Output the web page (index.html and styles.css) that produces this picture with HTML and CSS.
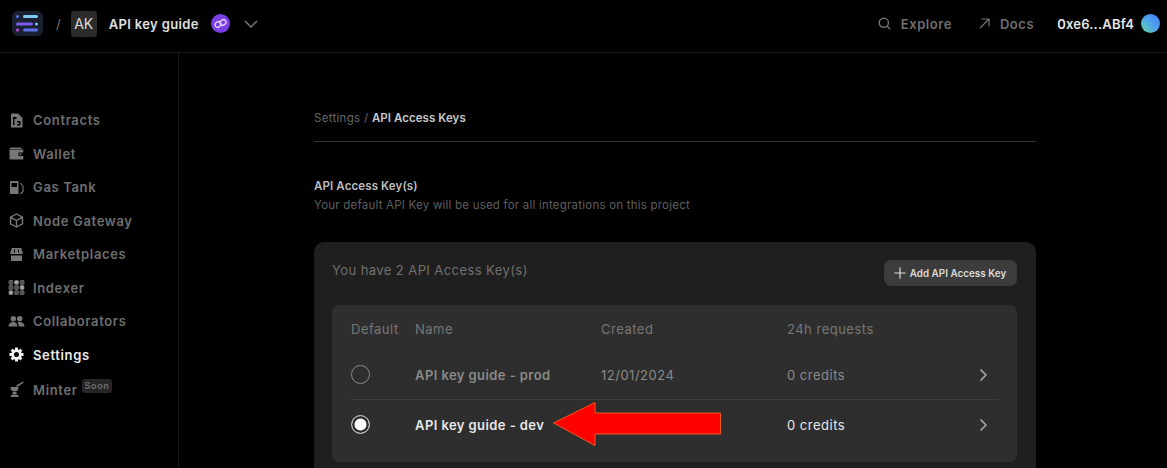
FILE: index.html
```html
<!DOCTYPE html>
<html lang="en">
<head>
<meta charset="utf-8">
<title>API Access Keys</title>
<link rel="stylesheet" href="styles.css">
</head>
<body>
<header class="topbar">
  <div class="topbar-left">
    <svg class="logo" width="32" height="26" viewBox="0 0 32 26"><rect width="31" height="25" x="0" y="0" rx="6" fill="#1b2030"/><rect x="4" y="4" width="3" height="3" rx="1.500" fill="#4f7cf0"/><rect x="11" y="4" width="15" height="3" rx="1.500" fill="#7ccbf5"/><rect x="4" y="11.500" width="17" height="3" rx="1.500" fill="#7a5cf0"/><rect x="23" y="11.500" width="3" height="3" rx="1.500" fill="#76c4f5"/><rect x="4" y="17.500" width="3" height="3" rx="1.500" fill="#c04ce0"/><rect x="11" y="17.500" width="15" height="3" rx="1.500" fill="#5a70e8"/></svg>
    <span class="slash">/</span>
    <span class="avatar">AK</span>
    <span class="project">API key guide</span>
    <svg class="chain" width="19" height="19" viewBox="0 0 19 19"><circle cx="9.500" cy="9.500" r="9.500" fill="#7b3fe4"/><rect x="4" y="8" width="6" height="5" rx="2.400" transform="rotate(-35 7 10.500)" fill="none" stroke="#e4d8f8" stroke-width="1.300"/><rect x="9" y="6" width="6" height="5" rx="2.400" transform="rotate(-35 12 8.500)" fill="none" stroke="#e4d8f8" stroke-width="1.300"/></svg>
    <svg class="caret" width="14" height="8" viewBox="0 0 14 8"><path d="M1 1l6 6 6-6" fill="none" stroke="#777" stroke-width="1.500"/></svg>
  </div>
  <nav class="topbar-right">
    <a class="toplink toplink-explore"><svg width="13" height="13" viewBox="0 0 13 13"><circle cx="5.800" cy="5.800" r="4.600" fill="none" stroke="#777" stroke-width="1.300"/><path d="M9.200 9.200l3 3" stroke="#777" stroke-width="1.300"/></svg>Explore</a>
    <a class="toplink toplink-docs"><svg width="11" height="11" viewBox="0 0 11 11"><path d="M1 10L10 1M2.500 1H10v7.500" fill="none" stroke="#777" stroke-width="1.200"/></svg>Docs</a>
    <span class="wallet">0xe6...ABf4</span>
    <span class="wallet-dot"></span>
  </nav>
</header>
<div class="shell">
  <aside class="sidebar">
    <a class="side-item"><svg class="side-icon" viewBox="0 0 17 17"><path fill="#777" fill-rule="evenodd" d="M3 1.500h7l4.500 4.500v9.500H3zM5 5v8h1.500V7H8.500V5zm4 4v1.500h2V12H9v1.500h3.500V9z"/></svg>Contracts</a>
    <a class="side-item"><svg class="side-icon" viewBox="0 0 17 17"><path fill="#777" d="M3 2.500h10.500v1.500H1.800C1.800 3 2.300 2.500 3 2.500z"/><path fill="#777" fill-rule="evenodd" d="M2.500 4.500h12.800v10H2.500a1 1 0 0 1-1-1V4.500zM10.500 7.500v3.500h4.800V7.500z"/><circle cx="12.500" cy="9.200" r="1" fill="#777"/></svg>Wallet</a>
    <a class="side-item"><svg class="side-icon" viewBox="0 0 17 17"><path fill="#777" fill-rule="evenodd" d="M3 2h6.500a1 1 0 0 1 1 1v12H2V3a1 1 0 0 1 1-1zM3.500 4v4h5.500V4z"/><path fill="none" stroke="#777" stroke-width="1.100" d="M12.500 4l2.500 3.500v5l-2.500 2.500"/></svg>Gas Tank</a>
    <a class="side-item"><svg class="side-icon" viewBox="0 0 17 17"><path fill="none" stroke="#777" stroke-width="1.400" d="M8.500 2l6 3.200v6.600l-6 3.200-6-3.200V5.200zM2.500 5.200l6 3.300 6-3.300M8.500 8.500V15"/></svg>Node Gateway</a>
    <a class="side-item"><svg class="side-icon" viewBox="0 0 17 17"><path fill="#777" d="M3.500 2h10v1.500l1.500 3.500a1.500 1.500 0 0 1-1.500 1h-10A1.500 1.500 0 0 1 2 7l1.500-3.500z"/><path fill="#000" d="M6 3.500h1v3H6zM10 3.500h1v3h-1z"/><path fill="#777" d="M3 9.500h11V15H3z"/></svg>Marketplaces</a>
    <a class="side-item"><svg class="side-icon" viewBox="0 0 17 17"><g fill="#4d4d4d" stroke="#777" stroke-width=".8"><rect x="1" y="1.500" width="3.800" height="3.800" rx=".8"/><rect x="6.600" y="1.500" width="3.800" height="3.800" rx=".8" fill="#aaa"/><rect x="12.200" y="1.500" width="3.800" height="3.800" rx=".8"/><rect x="1" y="6.600" width="3.800" height="3.800" rx=".8"/><rect x="6.600" y="6.600" width="3.800" height="3.800" rx=".8"/><rect x="12.200" y="6.600" width="3.800" height="3.800" rx=".8" fill="#aaa"/><rect x="1" y="11.700" width="3.800" height="3.800" rx=".8" fill="#aaa"/><rect x="6.600" y="11.700" width="3.800" height="3.800" rx=".8"/><rect x="12.200" y="11.700" width="3.800" height="3.800" rx=".8"/></g></svg>Indexer</a>
    <a class="side-item"><svg class="side-icon" viewBox="0 0 17 17"><g fill="#777"><circle cx="5.300" cy="5.700" r="2.700"/><circle cx="11.700" cy="5.700" r="2.700"/><path d="M.5 13.500c0-3 2-4.500 4.800-4.500s4 1.500 4.200 4.500zM10.700 13.500c0-1.800-.4-3.200-1.300-4.200.7-.2 1.400-.3 2.300-.3 2.800 0 4.800 1.500 4.800 4.500z"/></g></svg>Collaborators</a>
    <a class="side-item side-item-active"><svg class="side-icon" viewBox="0 0 17 17"><g fill="#f2f2f2"><rect x="7" y="1.500" width="3" height="14" rx=".6"/><rect x="7" y="1.500" width="3" height="14" rx=".6" transform="rotate(45 8.500 8.500)"/><rect x="7" y="1.500" width="3" height="14" rx=".6" transform="rotate(90 8.500 8.500)"/><rect x="7" y="1.500" width="3" height="14" rx=".6" transform="rotate(135 8.500 8.500)"/><circle cx="8.500" cy="8.500" r="5.200"/></g><circle cx="8.500" cy="8.500" r="2.500" fill="#000"/></svg>Settings</a>
    <a class="side-item side-item-minter"><svg class="side-icon" viewBox="0 0 17 17"><g fill="#777"><path d="M2.500 6h8c0 3-1.500 4.500-4 4.500S2.500 9 2.500 6z"/><rect x="4.500" y="11" width="4" height="2"/><path d="M2.500 16c.3-1.500 1-2.500 2-2.500h4c1 0 2 1 2.500 2.500z"/><path d="M8 4.500L15 .5l.8 1.300L9 6z"/></g></svg>Minter<span class="soon">Soon</span></a>
  </aside>
  <main class="content">
    <p class="crumbs">Settings / <b>API Access Keys</b></p>
    <div class="rule"></div>
    <h1 class="section-title">API Access Key(s)</h1>
    <p class="section-sub">Your default API Key will be used for all integrations on this project</p>
    <section class="card">
      <div class="card-head">
        <span class="card-title">You have 2 API Access Key(s)</span>
        <button class="add-btn"><svg width="12" height="12" viewBox="0 0 12 12"><path d="M6 .5v11M.5 6h11" stroke="#ddd" stroke-width="1.200"/></svg>Add API Access Key</button>
      </div>
      <div class="table">
        <div class="row row-head"><span>Default</span><span>Name</span><span>Created</span><span>24h requests</span><span></span></div>
        <div class="row row-body row-line">
          <span><i class="radio"></i></span><span class="key-name">API key guide - prod</span><span>12/01/2024</span><span>0 credits</span>
          <svg class="chev" width="9" height="14" viewBox="0 0 9 14"><path d="M1.500 1.500L7 7l-5.500 5.500" fill="none" stroke="#aaa" stroke-width="1.500"/></svg>
        </div>
        <div class="row row-body row-on">
          <span><i class="radio radio-on"></i></span><span class="key-name">API key guide - dev</span><span></span><span>0 credits</span>
          <svg class="chev" width="9" height="14" viewBox="0 0 9 14"><path d="M1.500 1.500L7 7l-5.500 5.500" fill="none" stroke="#aaa" stroke-width="1.500"/></svg>
        </div>
        <svg class="arrow" width="170" height="44" viewBox="0 0 170 44"><path d="M1.500 21L43 .5V11h125.500v21H43v11.500z" fill="#fe0000" stroke="#f05a1e" stroke-width="1"/></svg>
      </div>
    </section>
  </main>
</div>
</body>
</html>
```
FILE: styles.css
```css
* { box-sizing: border-box; }
html, body { margin: 0; height: 468px; overflow: hidden; background: #000; }
body { font-family: Inter, "Liberation Sans", sans-serif; color: #777; font-size: 13px; }
.topbar { height: 53px; border-bottom: 1px solid #1a1a1a; display: flex; align-items: center; justify-content: space-between; padding: 0 7px 5px 12px; }
.topbar-left, .topbar-right { display: flex; align-items: center; }
.slash { margin-left: 12px; color: #777; font-size: 13px; }
.avatar { margin-left: 10px; width: 26px; height: 26px; border-radius: 3px; background: #2b2b2b; color: #ddd; display: flex; align-items: center; justify-content: center; font-size: 14px; }
.project { margin-left: 12px; color: #e0e0e0; font-weight: 600; letter-spacing: .35px; }
.chain { margin-left: 12px; }
.caret { margin-left: 14px; }
.toplink { display: flex; align-items: center; color: #6f6f6f; font-weight: 600; letter-spacing: .55px; }
.toplink svg { margin-right: 10px; }
.toplink-docs { margin-left: 27px; }
.wallet { margin-left: 23px; color: #e6e6e6; font-weight: 600; letter-spacing: .2px; }
.wallet-dot { margin-left: 7px; width: 19px; height: 19px; border-radius: 50%; background: linear-gradient(45deg, #62d6a0, #4f9ff0 55%, #3f7ff5); }
.shell { display: flex; height: 415px; }
.sidebar { width: 179px; border-right: 1px solid #1a1a1a; padding: 50.7px 0 0 8px; flex: none; }
.side-item { height: 33.5px; display: flex; align-items: center; color: #6f6f6f; font-weight: 600; letter-spacing: .65px; white-space: nowrap; }
.side-item-active { color: #ececec; }
.side-icon { width: 17px; height: 17px; margin-right: 8px; flex: none; }
.side-item-minter { padding-top: 3px; }
.soon { margin: -7px 0 0 4px; padding: 1px 3px; border-radius: 3px; background: #262626; font-size: 9px; line-height: 12px; color: #6f6f6f; }
.content { width: 722px; margin-left: 135px; padding-top: 57px; }
.crumbs { margin: 0; font-size: 11.5px; line-height: 16px; color: #666; letter-spacing: .3px; }
.crumbs b { color: #c8c8c8; font-weight: 600; letter-spacing: .05px; }
.rule { height: 1px; background: #333; margin-top: 15px; }
.section-title { margin: 36px 0 0; font-size: 11.5px; line-height: 16px; font-weight: 600; color: #bdbdbd; letter-spacing: .12px; }
.section-sub { margin: 3px 0 0; font-size: 11.5px; line-height: 16px; color: #5f5f5f; letter-spacing: .22px; }
.card { margin-top: 29px; background: #1f1f1f; border-radius: 10px 10px 0 0; height: 240px; padding: 18px 19px 0 18px; }
.card-head { height: 45px; display: flex; justify-content: space-between; align-items: flex-start; }
.card-title { margin-top: 1px; font-size: 13px; line-height: 18px; color: #707070; letter-spacing: .42px; }
.add-btn { height: 26px; width: 133px; border: 0; border-radius: 7px; background: #3c3c3c; color: #dcdcdc; font: 600 9.8px Inter, sans-serif; display: flex; align-items: center; justify-content: center; gap: 4px; padding: 0 1px 0 0; letter-spacing: .05px; }
.table { position: relative; background: #2e2e2e; border-radius: 7px; height: 157px; padding: 0 18px 0 19px; }
.row { display: grid; grid-template-columns: 64px 186px 186px 1fr 20px; align-items: center; font-size: 13px; letter-spacing: .5px; }
.row-head { height: 48px; color: #777; }
.row-body { color: #8a8a8a; }
.row-line { border-bottom: 1px solid #3e3e3e; height: 47px; padding-bottom: 3px; }
.row-on { color: #e8e8e8; height: 49px; }
.key-name { font-weight: 600; letter-spacing: .42px; }
.radio { display: block; width: 19px; height: 19px; border-radius: 50%; border: 1px solid #8a8a8a; }
.radio-on { border-color: #bbb; background: #fff; box-shadow: inset 0 0 0 2.5px #2e2e2e; }
.chev { justify-self: start; }
.arrow { position: absolute; left: 220px; top: 97px; }
```
